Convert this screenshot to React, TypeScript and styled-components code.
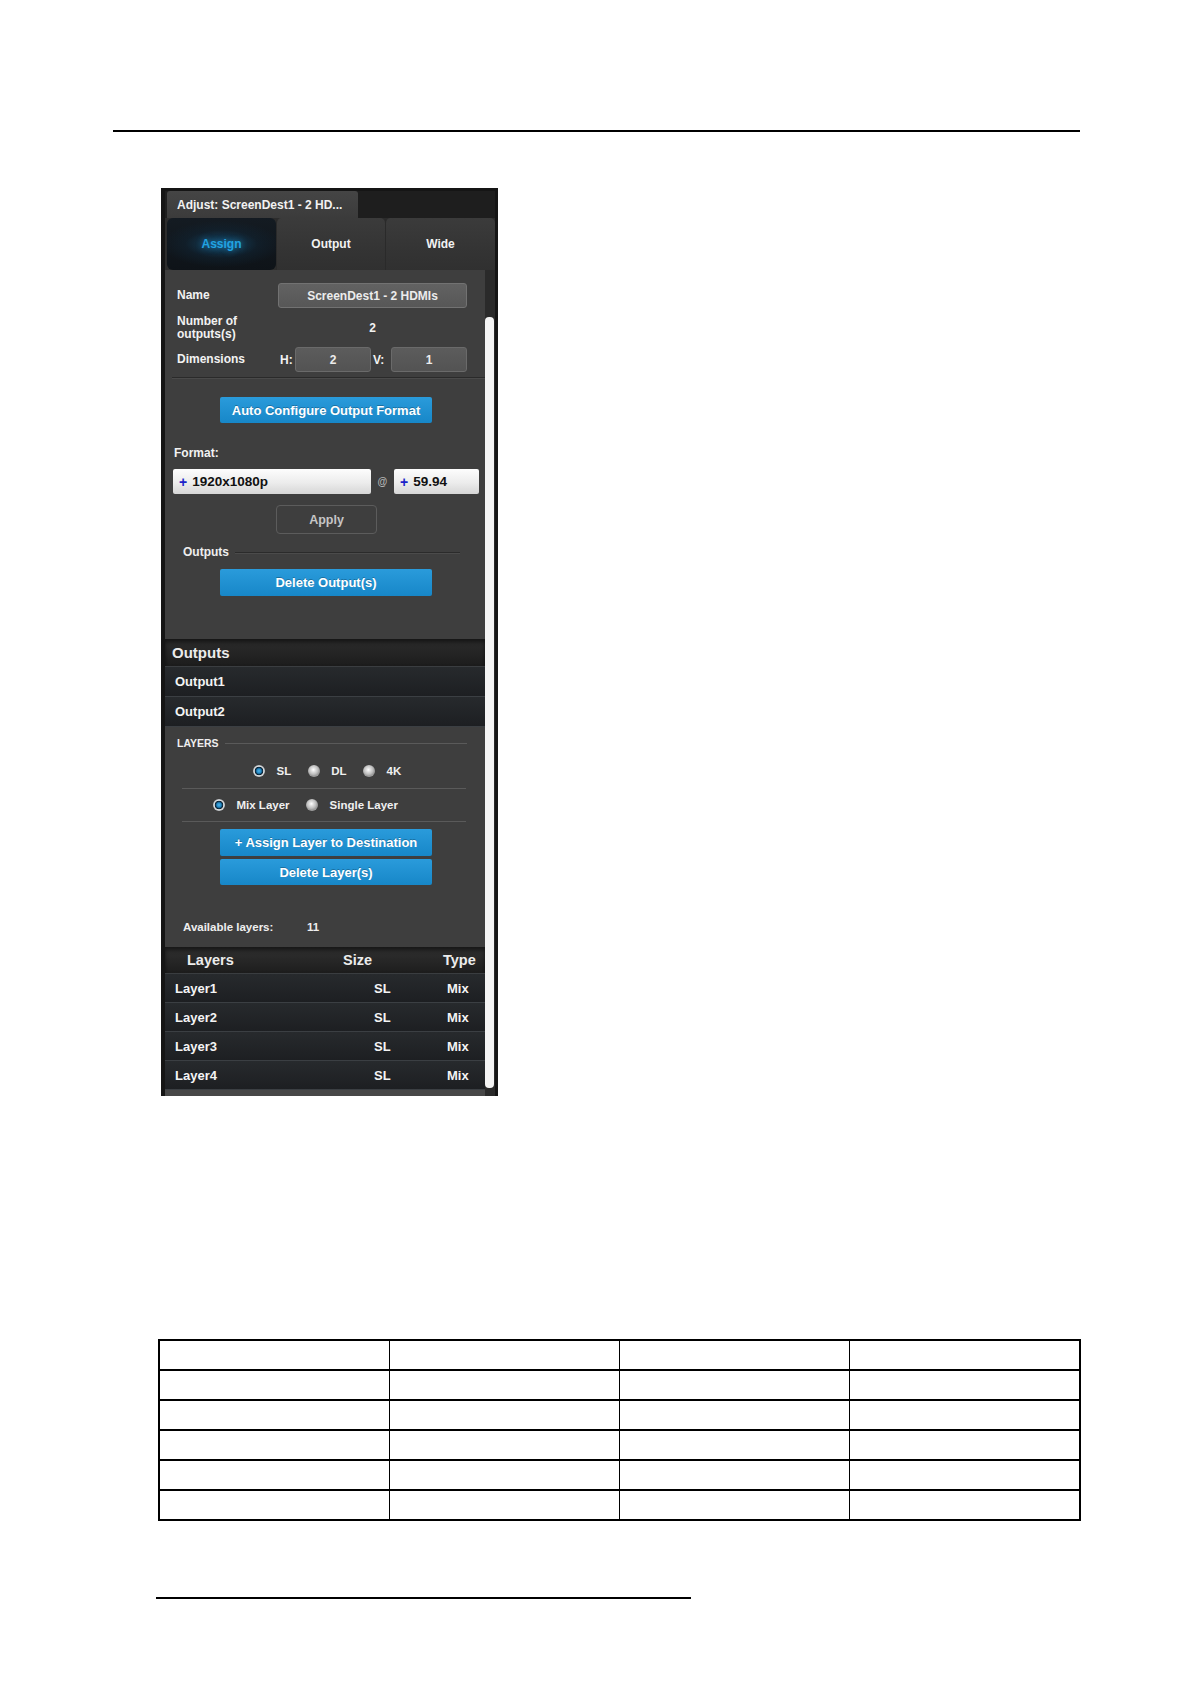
import React from "react";
import styled, { createGlobalStyle, css } from "styled-components";

const GlobalStyle = createGlobalStyle`
  html, body { margin: 0; padding: 0; background: #ffffff; }
  * { box-sizing: border-box; }
`;

const Page = styled.div`
  width: 1190px;
  min-height: 1684px;
  padding-top: 130px;
  font-family: "Liberation Sans", Arial, sans-serif;
  background: #ffffff;
  overflow: hidden;
`;

const Rule = styled.div<{ $left: number; $width: number; $top: number }>`
  margin-left: ${(p) => p.$left}px;
  margin-top: ${(p) => p.$top}px;
  width: ${(p) => p.$width}px;
  height: 2px;
  background: #000;
`;

/* ---------- Panel frame ---------- */
const Panel = styled.div`
  margin-top: 56px;
  margin-left: 161px;
  width: 337px;
  display: flex;
  flex-direction: column;
  background: #161616;
  border-top: 3px solid #151515;
  border-left: 4px solid #151515;
  border-right: 3px solid #151515;
  color: #f2f2f2;
  font-weight: 700;
`;

const TitleStrip = styled.div`
  height: 27px;
  display: flex;
  padding-left: 2px;
  background: #1e1e1e;
`;

const TitleTab = styled.div`
  width: 191px;
  background: linear-gradient(#454545, #3b3b3b);
  border-radius: 3px 3px 0 0;
  font-size: 12px;
  line-height: 28px;
  padding-left: 10px;
  color: #f2f2f2;
  white-space: nowrap;
`;

const TabBar = styled.div`
  height: 52px;
  display: flex;
  padding-left: 2px;
  background: #2c2c2c;
`;

const Tab = styled.div<{ $active?: boolean; $fixed?: boolean }>`
  flex: ${(p) => (p.$fixed ? "0 0 109px" : "1 1 auto")};
  display: flex;
  align-items: center;
  justify-content: center;
  font-size: 12px;
  ${(p) =>
    p.$active
      ? css`
          background: radial-gradient(ellipse 55% 45% at 50% 50%, rgba(24, 110, 160, 0.55), rgba(16, 40, 58, 0.4) 60%, rgba(0, 0, 0, 0) 100%),
            linear-gradient(#141b22, #0e1318);
          border-radius: 6px;
          color: #21a3e2;
          text-shadow: 0 0 6px rgba(40, 160, 230, 0.7);
        `
      : css`
          background: linear-gradient(#3b3b3b, #343434 60%, #303030);
          border-radius: 5px 5px 0 0;
          border-left: 1px solid #2a2a2a;
          color: #f2f2f2;
        `}
`;

const BodyRow = styled.div`
  display: flex;
`;

const Content = styled.div`
  flex: 1 1 auto;
  min-width: 0;
  display: flex;
  flex-direction: column;
`;

const ScrollTrack = styled.div`
  flex: 0 0 10px;
  display: flex;
  flex-direction: column;
  padding: 47px 1px 8px 0;
  background: #2a2a2a;
`;

const ScrollThumb = styled.div`
  flex: 1 1 auto;
  background: #f4f4f4;
  border-radius: 4px;
`;

/* ---------- Sections ---------- */
const Section = styled.div<{ $pt: number; $pb: number }>`
  background: #3e3e3e;
  padding: ${(p) => p.$pt}px 0 ${(p) => p.$pb}px;
  display: flex;
  flex-direction: column;
`;

const FieldRow = styled.div<{ $mt?: number; $h: number }>`
  display: grid;
  grid-template-columns: 101px 189px;
  align-items: center;
  padding-left: 12px;
  margin-top: ${(p) => p.$mt ?? 0}px;
  height: ${(p) => p.$h}px;
`;

const Label = styled.div<{ $size?: number }>`
  font-size: ${(p) => p.$size ?? 12}px;
  line-height: 13px;
  color: #f2f2f2;
`;

const ReadBox = styled.div`
  height: 25px;
  border-radius: 3px;
  border: 1px solid #727272;
  background: linear-gradient(#626262, #575757);
  color: #ececec;
  font-size: 12px;
  display: flex;
  align-items: center;
  justify-content: center;
`;

const Value = styled.div`
  text-align: center;
  font-size: 12px;
`;

const DimGroup = styled.div`
  display: flex;
  align-items: center;
`;

const DimTag = styled.div<{ $w: number }>`
  flex: 0 0 ${(p) => p.$w}px;
  padding-left: 2px;
  font-size: 12px;
`;

const DimBox = styled(ReadBox)`
  flex: 0 0 76px;
  background: linear-gradient(#5c5c5c, #535353);
  border-color: #6a6a6a;
`;

const Separator = styled.div<{ $mt: number; $ml: number; $mr: number; $light?: boolean }>`
  margin: ${(p) => p.$mt}px ${(p) => p.$mr}px 0 ${(p) => p.$ml}px;
  height: 1px;
  background: ${(p) => (p.$light ? "#5a5a5a" : "#2a2a2a")};
  box-shadow: ${(p) => (p.$light ? "none" : "0 1px 0 #4a4a4a")};
`;

const BlueButton = styled.div<{ $mt: number; $h: number }>`
  margin-top: ${(p) => p.$mt}px;
  margin-left: 55px;
  width: 212px;
  height: ${(p) => p.$h}px;
  border-radius: 2px;
  background: linear-gradient(#2a9bdb, #1787c8);
  color: #ffffff;
  font-size: 13px;
  display: flex;
  align-items: center;
  justify-content: center;
  text-shadow: 0 -1px 0 rgba(0, 0, 0, 0.25);
  white-space: nowrap;
`;

const FormatLabel = styled.div`
  margin-top: 23px;
  padding-left: 9px;
  font-size: 12px;
  line-height: 14px;
`;

const FormatRow = styled.div`
  margin-top: 9px;
  margin-left: 8px;
  height: 25px;
  display: flex;
  align-items: center;
`;

const SelectBox = styled.div<{ $w: number }>`
  flex: 0 0 ${(p) => p.$w}px;
  height: 25px;
  border-radius: 2px;
  background: linear-gradient(#fdfdfd, #ececec 55%, #d6d6d6);
  color: #111;
  font-size: 13.5px;
  display: flex;
  align-items: center;
  padding-left: 6px;
`;

const Plus = styled.span`
  color: #1a23c9;
  margin-right: 5px;
  font-size: 14px;
`;

const At = styled.div`
  flex: 0 0 23px;
  text-align: center;
  color: #b4b4b4;
  font-size: 10px;
`;

const GhostButton = styled.div`
  margin-top: 11px;
  margin-left: 111px;
  width: 101px;
  height: 29px;
  border: 1px solid #5c5c5c;
  border-radius: 4px;
  color: #c6c6c6;
  font-size: 12.5px;
  display: flex;
  align-items: center;
  justify-content: center;
`;

const DividerRow = styled.div<{ $mt: number; $pl: number; $pr: number; $light?: boolean }>`
  margin-top: ${(p) => p.$mt}px;
  padding: 0 ${(p) => p.$pr}px 0 ${(p) => p.$pl}px;
  height: 14px;
  display: flex;
  align-items: center;
  gap: 6px;
  &::after {
    content: "";
    flex: 1 1 auto;
    height: 1px;
    background: ${(p) => (p.$light ? "#5a5a5a" : "#2b2b2b")};
    box-shadow: ${(p) => (p.$light ? "none" : "0 1px 0 #4b4b4b")};
  }
`;

const DividerText = styled.span<{ $size: number }>`
  font-size: ${(p) => p.$size}px;
  color: #eeeeee;
`;

/* ---------- dark list parts ---------- */
const Band = styled.div`
  height: 28px;
  padding-left: 7px;
  display: flex;
  align-items: center;
  font-size: 15px;
  color: #ececec;
  background: linear-gradient(#2c2c2c, #232323 60%, #1c1c1c);
  box-shadow: inset 0 3px 4px rgba(0, 0, 0, 0.55);
  border-bottom: 1px solid #3a3d40;
`;

const ListRow = styled.div`
  height: 30px;
  padding-left: 10px;
  display: flex;
  align-items: center;
  font-size: 13px;
  color: #f4f4f4;
  background: linear-gradient(#272a2d, #1d1f22);
  border-bottom: 1px solid #3b3f43;
`;

const RadioRow = styled.div<{ $mt: number; $pl: number }>`
  margin-top: ${(p) => p.$mt}px;
  padding-left: ${(p) => p.$pl}px;
  height: 16px;
  display: flex;
  align-items: center;
  gap: 16.5px;
`;

const RadioItem = styled.div`
  display: flex;
  align-items: center;
  gap: 11.5px;
  font-size: 11.5px;
  color: #f0f0f0;
  white-space: nowrap;
`;

const Radio = styled.span<{ $on?: boolean }>`
  flex: 0 0 12px;
  width: 12px;
  height: 12px;
  border-radius: 50%;
  ${(p) =>
    p.$on
      ? css`
          background: radial-gradient(circle, #52b4ea 0, #2187c2 2.2px, #0c3552 3.4px, #0a1b27 4px, #dfe2e4 4.6px, #b7bbbe 6px);
        `
      : css`
          background: radial-gradient(circle at 45% 40%, #ffffff 0, #e0e0e0 2px, #bdbdbd 4.5px, #9c9c9c 6px);
        `}
`;

const AvailRow = styled.div`
  margin-top: 35px;
  padding-left: 18px;
  height: 14px;
  display: flex;
  align-items: center;
  font-size: 11.5px;
  color: #eeeeee;
`;

const AvailLabel = styled.span`
  flex: 0 0 124px;
`;

const LayersHead = styled.div`
  height: 27px;
  display: grid;
  grid-template-columns: 178px 100px 1fr;
  align-items: center;
  font-size: 14.5px;
  color: #ececec;
  background: linear-gradient(#303030, #262626 55%, #1d1d1d);
  box-shadow: inset 0 3px 4px rgba(0, 0, 0, 0.55);
  border-bottom: 1px solid #3a3d40;
  & > span:first-child {
    padding-left: 22px;
  }
`;

const LayerRow = styled.div`
  height: 29px;
  display: grid;
  grid-template-columns: 199px 73px 1fr;
  align-items: center;
  padding-left: 10px;
  font-size: 13px;
  color: #f4f4f4;
  background: linear-gradient(#272a2d, #1d1f22);
  border-bottom: 1px solid #3b3f43;
`;

const BottomStrip = styled.div`
  height: 6px;
  background: #474747;
`;

/* ---------- document table ---------- */
const DocTable = styled.table`
  margin-top: 243px;
  margin-left: 158px;
  width: 923px;
  border-collapse: collapse;
  table-layout: fixed;
  border: 2px solid #000;
`;

const DocCell = styled.td`
  height: 30px;
  padding: 0;
  border-top: 2px solid #000;
  border-bottom: 2px solid #000;
  border-left: 1px solid #000;
  border-right: 1px solid #000;
`;

const layers = ["Layer1", "Layer2", "Layer3", "Layer4"];

export default function App() {
  return (
    <Page>
      <GlobalStyle />
      <Rule $left={113} $width={967} $top={0} />

      <Panel>
        <TitleStrip>
          <TitleTab>Adjust: ScreenDest1 - 2 HD...</TitleTab>
        </TitleStrip>
        <TabBar>
          <Tab $active $fixed>Assign</Tab>
          <Tab $fixed>Output</Tab>
          <Tab>Wide</Tab>
        </TabBar>

        <BodyRow>
          <Content>
            <Section $pt={13} $pb={43}>
              <FieldRow $h={25}>
                <Label>Name</Label>
                <ReadBox>ScreenDest1 - 2 HDMIs</ReadBox>
              </FieldRow>
              <FieldRow $mt={7} $h={26}>
                <Label>
                  Number of
                  <br />
                  outputs(s)
                </Label>
                <Value>2</Value>
              </FieldRow>
              <FieldRow $mt={6} $h={25}>
                <Label>Dimensions</Label>
                <DimGroup>
                  <DimTag $w={17}>H:</DimTag>
                  <DimBox>2</DimBox>
                  <DimTag $w={20}>V:</DimTag>
                  <DimBox>1</DimBox>
                </DimGroup>
              </FieldRow>
              <Separator $mt={5} $ml={7} $mr={0} />

              <BlueButton $mt={19} $h={26}>Auto Configure Output Format</BlueButton>

              <FormatLabel>Format:</FormatLabel>
              <FormatRow>
                <SelectBox $w={198}>
                  <Plus>+</Plus>1920x1080p
                </SelectBox>
                <At>@</At>
                <SelectBox $w={85}>
                  <Plus>+</Plus>59.94
                </SelectBox>
              </FormatRow>

              <GhostButton>Apply</GhostButton>

              <DividerRow $mt={11} $pl={18} $pr={25}>
                <DividerText $size={12}>Outputs</DividerText>
              </DividerRow>

              <BlueButton $mt={10} $h={27}>Delete Output(s)</BlueButton>
            </Section>

            <Band>Outputs</Band>
            <ListRow>Output1</ListRow>
            <ListRow>Output2</ListRow>

            <Section $pt={9} $pb={13}>
              <DividerRow $mt={0} $pl={12} $pr={18} $light>
                <DividerText $size={10.5}>LAYERS</DividerText>
              </DividerRow>

              <RadioRow $mt={13} $pl={88}>
                <RadioItem>
                  <Radio $on />
                  SL
                </RadioItem>
                <RadioItem>
                  <Radio />
                  DL
                </RadioItem>
                <RadioItem>
                  <Radio />
                  4K
                </RadioItem>
              </RadioRow>
              <Separator $mt={9} $ml={17} $mr={19} $light />

              <RadioRow $mt={8} $pl={48}>
                <RadioItem>
                  <Radio $on />
                  Mix Layer
                </RadioItem>
                <RadioItem>
                  <Radio />
                  Single Layer
                </RadioItem>
              </RadioRow>
              <Separator $mt={8} $ml={17} $mr={19} $light />

              <BlueButton $mt={7} $h={27}>+ Assign Layer to Destination</BlueButton>
              <BlueButton $mt={3} $h={26}>Delete Layer(s)</BlueButton>

              <AvailRow>
                <AvailLabel>Available layers:</AvailLabel>
                <span>11</span>
              </AvailRow>
            </Section>

            <LayersHead>
              <span>Layers</span>
              <span>Size</span>
              <span>Type</span>
            </LayersHead>
            {layers.map((l) => (
              <LayerRow key={l}>
                <span>{l}</span>
                <span>SL</span>
                <span>Mix</span>
              </LayerRow>
            ))}
            <BottomStrip />
          </Content>
          <ScrollTrack>
            <ScrollThumb />
          </ScrollTrack>
        </BodyRow>
      </Panel>

      <DocTable>
        <tbody>
          {[0, 1, 2, 3, 4, 5].map((r) => (
            <tr key={r}>
              {[0, 1, 2, 3].map((c) => (
                <DocCell key={c} />
              ))}
            </tr>
          ))}
        </tbody>
      </DocTable>

      <Rule $left={156} $width={535} $top={76} />
    </Page>
  );
}
